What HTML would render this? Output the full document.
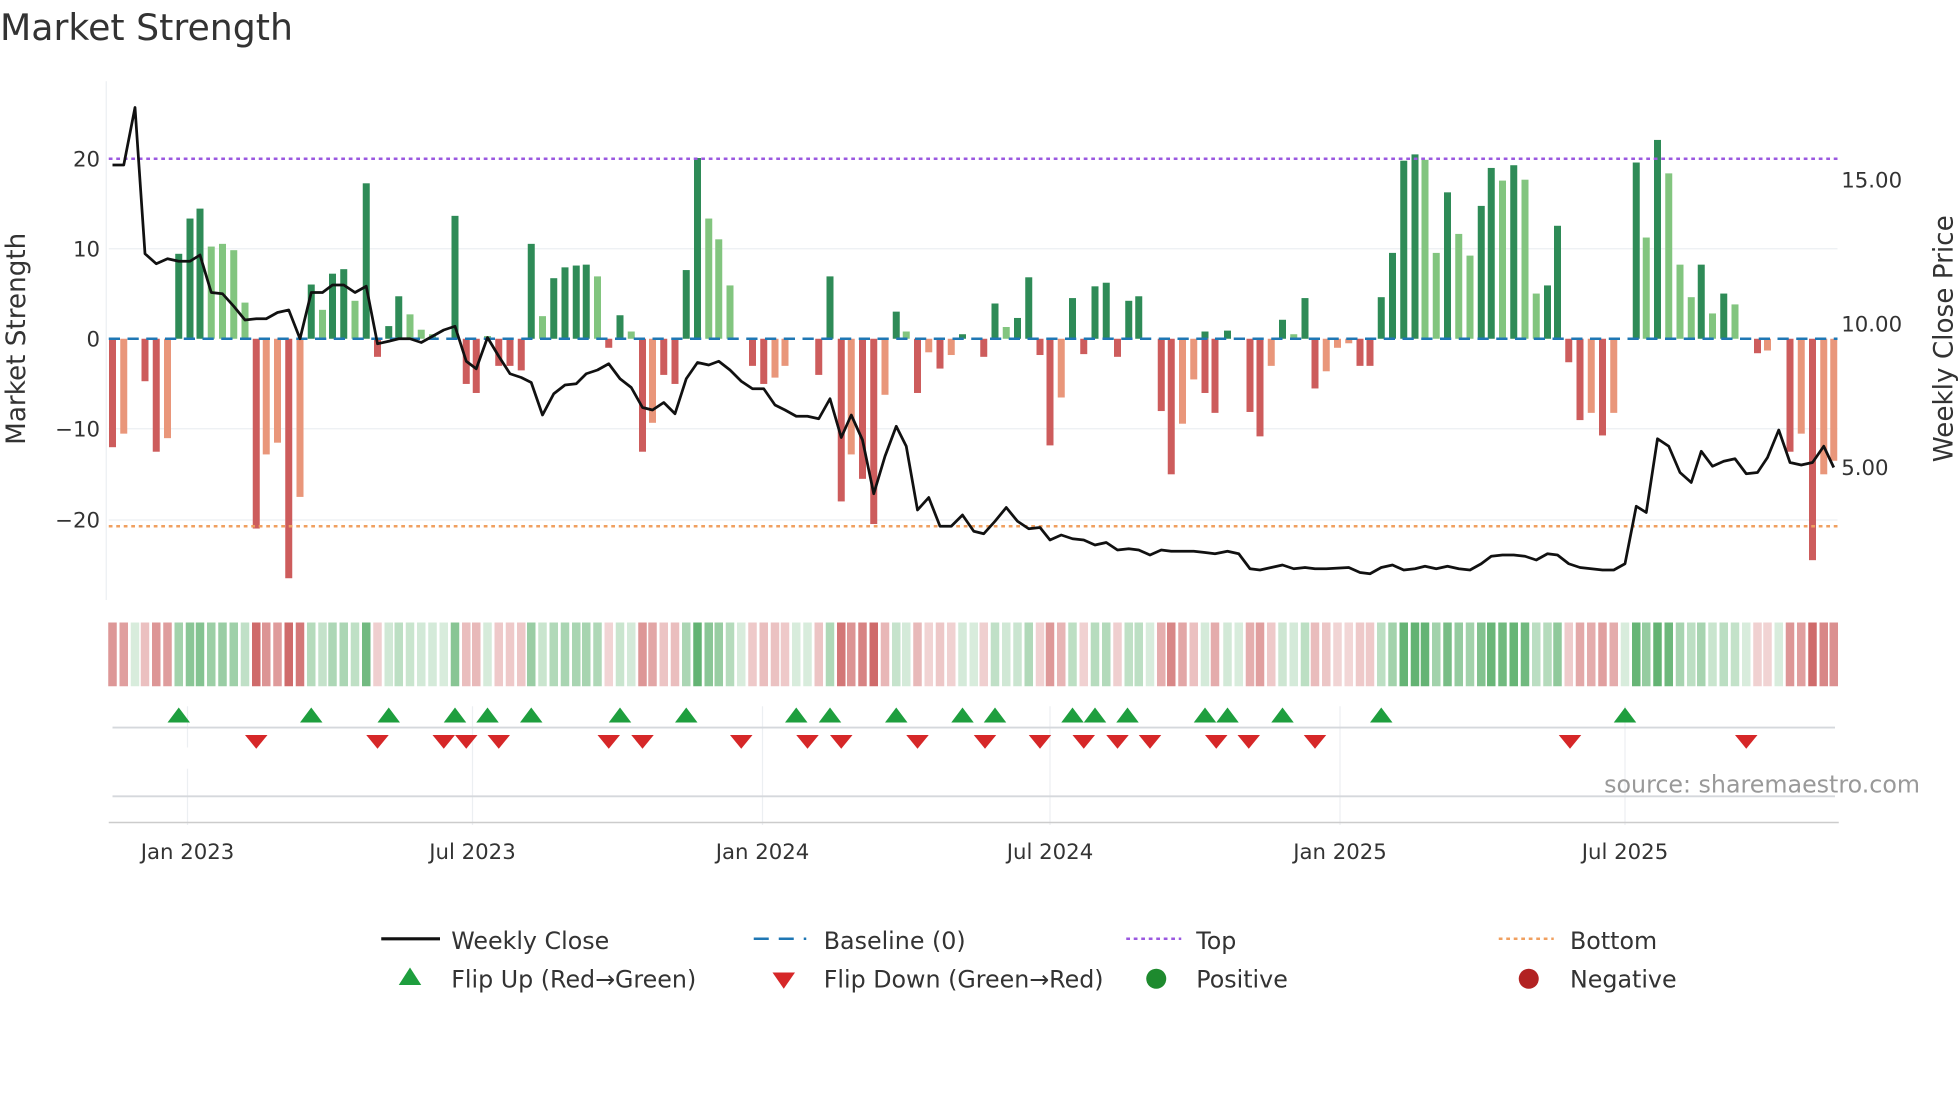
<!DOCTYPE html>
<html><head><meta charset="utf-8"><style>
html,body{margin:0;padding:0;background:#fff;}
svg{display:block;font-family:"DejaVu Sans","Liberation Sans",sans-serif;}
</style></head><body>
<svg id="s" width="1960" height="1102" viewBox="0 0 1568 881.6" xmlns="http://www.w3.org/2000/svg">
<rect width="1568" height="882" fill="#fff"/>
<text x="0" y="32" font-size="29" fill="#333">Market Strength</text>
<g stroke="#eceff2" stroke-width="1">
<line x1="87" x2="1470" y1="199" y2="199"/><line x1="87" x2="1470" y1="343" y2="343"/><line x1="87" x2="1470" y1="416" y2="416"/>
<line x1="85" x2="85" y1="65" y2="480"/>
<line x1="150" x2="150" y1="565" y2="598"/><line x1="378" x2="378" y1="565" y2="660"/><line x1="610" x2="610" y1="565" y2="660"/><line x1="840" x2="840" y1="565" y2="660"/><line x1="1072" x2="1072" y1="565" y2="660"/><line x1="1300" x2="1300" y1="565" y2="660"/>
<line x1="150" x2="150" y1="615" y2="660"/>
</g>
<line x1="90" x2="1468" y1="582" y2="582" stroke="#d5d8dc" stroke-width="1.5"/>
<line x1="90" x2="1468" y1="637" y2="637" stroke="#d5d8dc" stroke-width="1.5"/>
<line x1="87" x2="1471" y1="658" y2="658" stroke="#ccc" stroke-width="1.2"/>
<g id="bars"></g>
<g id="heat"></g>
<line x1="87" x2="1470" y1="271" y2="271" stroke="#1f77b4" stroke-width="2" stroke-dasharray="9,6"/>
<line x1="87" x2="1470" y1="127" y2="127" stroke="#9b59e0" stroke-width="2" stroke-dasharray="3,3"/>
<line x1="87" x2="1470" y1="421" y2="421" stroke="#f0a060" stroke-width="2" stroke-dasharray="3,3"/>
<polyline id="price" fill="none" stroke="#111" stroke-width="2.2" stroke-linejoin="round"/>
<g id="tri"></g>
<g font-size="17" fill="#333" text-anchor="end">
<text x="80" y="133">20</text><text x="80" y="205">10</text><text x="80" y="277">0</text><text x="80" y="349">−10</text><text x="80" y="422">−20</text>
</g>
<g font-size="17" fill="#333">
<text x="1473" y="150">15.00</text><text x="1473" y="265">10.00</text><text x="1473" y="380">5.00</text>
</g>
<text transform="translate(20,271) rotate(-90)" font-size="21" fill="#333" text-anchor="middle">Market Strength</text>
<text transform="translate(1562,271) rotate(-90)" font-size="21" fill="#333" text-anchor="middle">Weekly Close Price</text>
<g font-size="17" fill="#333" text-anchor="middle">
<text x="150" y="687">Jan 2023</text><text x="378" y="687">Jul 2023</text><text x="610" y="687">Jan 2024</text><text x="840" y="687">Jul 2024</text><text x="1072" y="687">Jan 2025</text><text x="1300" y="687">Jul 2025</text>
</g>
<text x="1536" y="634" font-size="19" fill="#999" text-anchor="end">source: sharemaestro.com</text>
<g font-size="19" fill="#333">
<line x1="305" x2="352" y1="751" y2="751" stroke="#111" stroke-width="2.5"/><text x="361" y="759">Weekly Close</text>
<line x1="603" x2="645" y1="751" y2="751" stroke="#1f77b4" stroke-width="2" stroke-dasharray="12,8"/><text x="659" y="759">Baseline (0)</text>
<line x1="901" x2="945" y1="751" y2="751" stroke="#9b59e0" stroke-width="2" stroke-dasharray="3,3"/><text x="957" y="759">Top</text>
<line x1="1199" x2="1243" y1="751" y2="751" stroke="#f0a060" stroke-width="2" stroke-dasharray="3,3"/><text x="1256" y="759">Bottom</text>
<polygon points="328,774 337,788 319,788" fill="#1e9e3e"/><text x="361" y="790">Flip Up (Red→Green)</text>
<polygon points="618,778 636,778 627,791" fill="#d62728"/><text x="659" y="790">Flip Down (Green→Red)</text>
<circle cx="925" cy="783" r="8" fill="#1e8a2e"/><text x="957" y="790">Positive</text>
<circle cx="1223" cy="783" r="8" fill="#b22222"/><text x="1256" y="790">Negative</text>
</g>
</svg>
<script>
var B=[[90,-12,'R'],[99,-10.5,'r'],[108,0,'r'],[116,-4.7,'R'],[125,-12.5,'R'],[134,-11,'r'],[143,9.4,'G'],[152,13.3,'G'],[160,14.4,'G'],[169,10.2,'g'],[178,10.5,'g'],[187,9.8,'g'],[196,4,'g'],[205,-21,'R'],[213,-12.8,'r'],[222,-11.5,'r'],[231,-26.5,'R'],[240,-17.5,'r'],[249,6,'G'],[258,3.2,'g'],[266,7.2,'G'],[275,7.7,'G'],[284,4.2,'g'],[293,17.2,'G'],[302,-2,'R'],[311,1.4,'G'],[319,4.7,'G'],[328,2.7,'g'],[337,1,'g'],[346,0.5,'g'],[355,0,'g'],[364,13.6,'G'],[373,-5,'R'],[381,-6,'R'],[390,0.3,'g'],[399,-3,'R'],[408,-3,'R'],[417,-3.5,'R'],[425,10.5,'G'],[434,2.5,'g'],[443,6.7,'G'],[452,7.9,'G'],[461,8.1,'G'],[469,8.2,'G'],[478,6.9,'g'],[487,-1,'R'],[496,2.6,'G'],[505,0.8,'g'],[514,-12.5,'R'],[522,-9.3,'r'],[531,-4,'R'],[540,-5,'R'],[549,7.6,'G'],[558,20,'G'],[567,13.3,'g'],[575,11,'g'],[584,5.9,'g'],[593,0,'g'],[602,-3,'R'],[611,-5,'R'],[620,-4.3,'r'],[628,-3,'r'],[637,0,'r'],[646,0,'r'],[655,-4,'R'],[664,6.9,'G'],[673,-18,'R'],[681,-12.8,'r'],[690,-15.5,'R'],[699,-20.5,'R'],[708,-6.2,'r'],[717,3,'G'],[725,0.8,'g'],[734,-6,'R'],[743,-1.5,'r'],[752,-3.3,'R'],[761,-1.8,'r'],[770,0.5,'G'],[779,0,'g'],[787,-2,'R'],[796,3.9,'G'],[805,1.3,'g'],[814,2.3,'G'],[823,6.8,'G'],[832,-1.8,'R'],[840,-11.8,'R'],[849,-6.5,'r'],[858,4.5,'G'],[867,-1.7,'R'],[876,5.8,'G'],[885,6.2,'G'],[894,-2,'R'],[903,4.2,'G'],[911,4.7,'G'],[920,0,'g'],[929,-8,'R'],[937,-15,'R'],[946,-9.4,'r'],[955,-4.5,'r'],[964,0.8,'G'],[964,-6,'R'],[972,-8.2,'R'],[982,0.9,'G'],[991,0,'g'],[1000,-8.1,'R'],[1008,-10.8,'R'],[1017,-3,'r'],[1026,2.1,'G'],[1035,0.5,'g'],[1044,4.5,'G'],[1052,-5.5,'R'],[1061,-3.6,'r'],[1070,-1,'r'],[1079,-0.5,'r'],[1088,-3,'R'],[1096,-3,'R'],[1105,4.6,'G'],[1114,9.5,'G'],[1123,19.7,'G'],[1132,20.4,'G'],[1140,19.8,'g'],[1149,9.5,'g'],[1158,16.2,'G'],[1167,11.6,'g'],[1176,9.2,'g'],[1185,14.7,'G'],[1193,18.9,'G'],[1202,17.5,'g'],[1211,19.2,'G'],[1220,17.6,'g'],[1229,5,'g'],[1238,5.9,'G'],[1246,12.5,'G'],[1255,-2.6,'R'],[1264,-9,'R'],[1273,-8.2,'r'],[1282,-10.7,'R'],[1291,-8.2,'r'],[1300,0,'g'],[1309,19.5,'G'],[1317,11.2,'g'],[1326,22,'G'],[1335,18.3,'g'],[1344,8.2,'g'],[1353,4.6,'g'],[1361,8.2,'G'],[1370,2.8,'g'],[1379,5,'G'],[1388,3.8,'g'],[1397,0,'g'],[1406,-1.6,'R'],[1414,-1.3,'r'],[1423,0,'r'],[1432,-12.5,'R'],[1441,-10.5,'r'],[1450,-24.5,'R'],[1459,-15,'r'],[1467,-13.5,'r']];
var C={G:'#2e8b57',g:'#82c57f',R:'#cd5c5c',r:'#e9967a'};
var ns='http://www.w3.org/2000/svg',bars=document.getElementById('bars'),heat=document.getElementById('heat');
function el(t,a,p){var e=document.createElementNS(ns,t);for(var k in a)e.setAttribute(k,a[k]);p.appendChild(e);return e;}
var seen={};
B.forEach(function(b){var v=b[1],h=Math.abs(v)*7.23,y=v>=0?271-h:271;
 if(h>0.5)el('rect',{x:b[0]-2.8,y:y,width:5.6,height:h,fill:C[b[2]]},bars);
 if(seen[b[0]])return;seen[b[0]]=1;
 var a=Math.min(1,Math.abs(v)/20),al=(0.2+a*0.6).toFixed(2),col=v>=0?'rgba(60,160,80,'+al+')':'rgba(195,70,70,'+al+')';
 el('rect',{x:b[0]-3.4,y:498,width:6.8,height:51,fill:col},heat);});
var P=[[90,132],[99,132],[108,86],[116,203],[125,211],[134,207],[143,209],[152,209],[160,204],[169,234],[178,235],[187,245],[196,256],[205,255],[213,255],[222,250],[231,248],[240,271],[249,234],[258,234],[266,228],[275,228],[284,234],[293,229],[302,275],[311,273],[319,271],[328,271],[337,274],[346,269],[355,264],[364,261],[373,289],[381,295],[390,270],[399,285],[408,299],[417,302],[425,306],[434,332],[443,315],[452,308],[461,307],[469,299],[478,296],[487,291],[496,303],[505,310],[514,326],[522,328],[531,322],[540,331],[549,303],[558,290],[567,292],[575,289],[584,296],[593,305],[602,311],[611,311],[620,324],[628,328],[637,333],[646,333],[655,335],[664,319],[673,350],[681,332],[690,352],[699,395],[708,365],[717,341],[725,357],[734,408],[743,398],[752,421],[761,421],[770,412],[779,425],[787,427],[796,417],[805,406],[814,417],[823,423],[832,422],[840,432],[849,428],[858,431],[867,432],[876,436],[885,434],[894,440],[903,439],[911,440],[920,444],[929,440],[937,441],[946,441],[955,441],[964,442],[972,443],[982,441],[991,443],[1000,455],[1008,456],[1017,454],[1026,452],[1035,455],[1044,454],[1052,455],[1061,455],[1079,454],[1088,458],[1096,459],[1105,454],[1114,452],[1123,456],[1132,455],[1140,453],[1149,455],[1158,453],[1167,455],[1176,456],[1185,451],[1193,445],[1202,444],[1211,444],[1220,445],[1229,448],[1238,443],[1246,444],[1255,451],[1264,454],[1273,455],[1282,456],[1291,456],[1300,451],[1309,405],[1317,410],[1326,351],[1335,357],[1344,378],[1353,386],[1361,361],[1370,373],[1379,369],[1388,367],[1397,379],[1406,378],[1414,366],[1423,344],[1432,370],[1441,372],[1450,370],[1459,357],[1467,374]];
document.getElementById('price').setAttribute('points',P.map(function(p){return p.join(',')}).join(' '));
var tri=document.getElementById('tri');
[143,249,311,364,390,425,496,549,637,664,717,770,796,858,876,902,964,982,1026,1105,1300].forEach(function(x){el('polygon',{points:x+',566 '+(x+9)+',578 '+(x-9)+',578',fill:'#1e9e3e'},tri);});
[205,302,355,373,399,487,514,593,646,673,734,788,832,867,894,920,973,999,1052,1256,1397].forEach(function(x){el('polygon',{points:(x-9)+',588 '+(x+9)+',588 '+x+',599',fill:'#d62728'},tri);});
</script>
</body></html>
